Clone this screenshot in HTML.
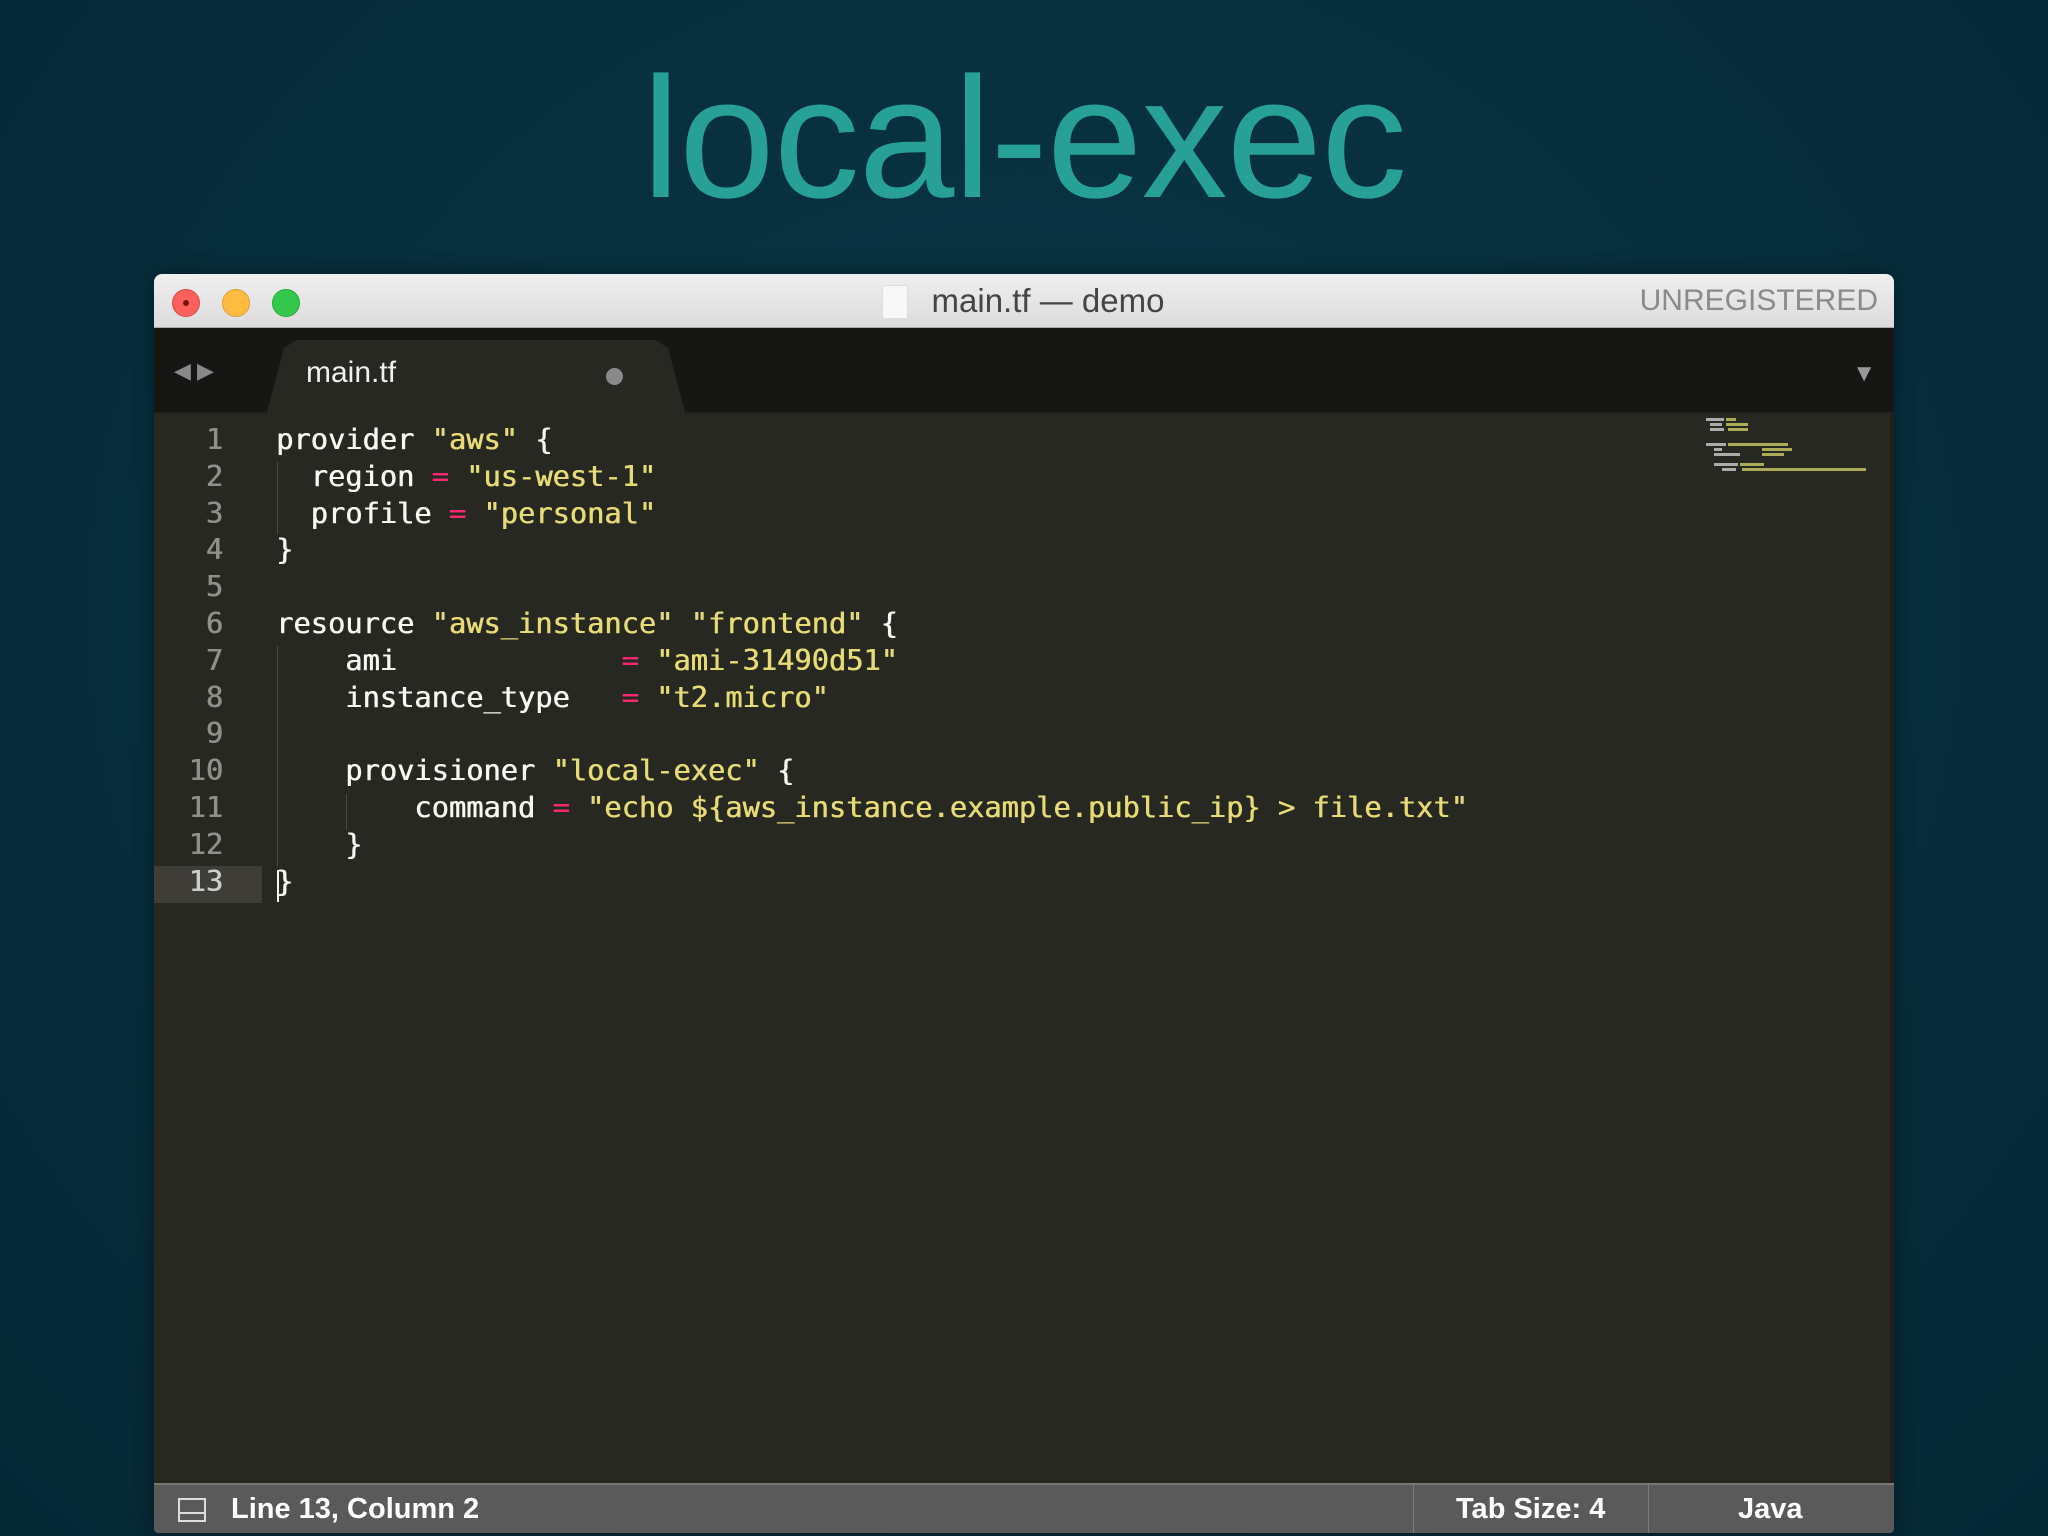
<!DOCTYPE html>
<html><head><meta charset="utf-8"><style>
*{margin:0;padding:0;box-sizing:border-box}
body{width:2048px;height:1536px;background:radial-gradient(ellipse at 50% 40%,#0a3646 0%,#072e3c 60%,#052835 100%);position:relative;overflow:hidden;font-family:"Liberation Sans",sans-serif}
.title{position:absolute;left:0;width:2048px;top:48px;text-align:center;color:#27a197;font-size:172px;letter-spacing:-1px;line-height:180px}
.win{position:absolute;left:154px;top:274px;width:1740px;height:1259px;background:#272822;border-radius:8px 8px 4px 4px;overflow:hidden;box-shadow:0 0 20px rgba(0,0,0,.4)}
.tb{position:absolute;left:0;top:0;width:100%;height:54px;background:linear-gradient(#efefef,#dcdcdc);border-bottom:1px solid #aaa}
.dot{position:absolute;top:15px;width:28px;height:28px;border-radius:50%}
.tt{position:absolute;left:24px;width:100%;top:8px;text-align:center;font-size:33px;color:#444}
.ur{position:absolute;right:16px;top:10px;font-size:30px;color:#8a8a8a}
.tabbar{position:absolute;left:0;top:54px;width:100%;height:86px;background:#161614;border-bottom:2px solid #222}
.tab{position:absolute;left:112px;top:12px;width:420px;height:76px;background:#272822;border-radius:18px 18px 0 0;clip-path:polygon(0 100%,18px 8px,30px 0,390px 0,402px 8px,100% 100%)}
.code{position:absolute;font-family:"DejaVu Sans Mono","Liberation Mono",monospace;font-size:28.7px;white-space:pre;color:#f8f8f2;text-shadow:0.6px 0 0 currentColor}
.ln{position:absolute;left:0;width:69px;text-align:right;color:#8f908a}
.s{color:#e6db74}.o{color:#f92672}
.g{position:absolute;width:1px;background:#4a4a44}
.sb{position:absolute;left:0;bottom:0;width:100%;height:50px;background:#5a5a5a;border-top:2px solid #777;color:#fff;font-size:29px;font-weight:bold}
</style></head><body>
<div class="title">local-exec</div>
<div class="win">
 <div class="tb">
  <div class="dot" style="left:18px;background:#fc605c;border:1px solid #de4a45"><div style="position:absolute;left:10px;top:10px;width:6px;height:6px;border-radius:50%;background:#7a1010"></div></div>
  <div class="dot" style="left:68px;background:#fdbc40;border:1px solid #dea033"></div>
  <div class="dot" style="left:118px;background:#34c84a;border:1px solid #27a83b"></div>
  <div style="position:absolute;left:728px;top:11px;width:26px;height:34px;background:#f8f8f8;border:1px solid #ddd;border-radius:2px"></div>
  <div class="tt">main.tf — demo</div>
  <div class="ur">UNREGISTERED</div>
 </div>
 <div class="tabbar">
  <div style="position:absolute;left:20px;top:30px;color:#888;font-size:22px">◀ ▶</div>
  <div class="tab"></div>
  <div style="position:absolute;left:152px;top:28px;color:#f0f0f0;font-size:30px">main.tf</div>
  <div style="position:absolute;left:452px;top:40px;width:17px;height:17px;border-radius:50%;background:#8a8a8a"></div>
  <div style="position:absolute;right:18px;top:32px;color:#999;font-size:24px">▼</div>
 </div>
 <div style="position:absolute;left:0;top:592px;width:108px;height:37px;background:#3e3d38"></div>
 <div class="g" style="left:123px;top:188px;height:72px"></div>
 <div class="g" style="left:123px;top:372px;height:220px"></div>
 <div class="g" style="left:192px;top:520px;height:36px"></div>
 <div class="code" style="left:0;top:147px;line-height:36.8px">
<div class="ln" style="top:0">1</div><div class="ln" style="top:36.8px">2</div><div class="ln" style="top:73.6px">3</div><div class="ln" style="top:110.4px">4</div><div class="ln" style="top:147.2px">5</div><div class="ln" style="top:184px">6</div><div class="ln" style="top:220.8px">7</div><div class="ln" style="top:257.6px">8</div><div class="ln" style="top:294.4px">9</div><div class="ln" style="top:331.2px">10</div><div class="ln" style="top:368px">11</div><div class="ln" style="top:404.8px">12</div><div class="ln" style="top:441.6px;color:#ccc">13</div>
 </div>
 <div class="code" style="left:122px;top:147px;line-height:36.8px">provider <span class="s">"aws"</span> {
  region <span class="o">=</span> <span class="s">"us-west-1"</span>
  profile <span class="o">=</span> <span class="s">"personal"</span>
}

resource <span class="s">"aws_instance"</span> <span class="s">"frontend"</span> {
    ami             <span class="o">=</span> <span class="s">"ami-31490d51"</span>
    instance_type   <span class="o">=</span> <span class="s">"t2.micro"</span>

    provisioner <span class="s">"local-exec"</span> {
        command <span class="o">=</span> <span class="s">"echo ${aws_instance.example.public_ip} &gt; file.txt"</span>
    }
}</div>
 <div style="position:absolute;left:123px;top:596px;width:2px;height:32px;background:#f8f8f0"></div>
 <div style="position:absolute;left:1552px;top:144px;width:170px;height:60px;opacity:.8">
  <div style="position:absolute;left:0;top:0;width:18px;height:3px;background:#ccc"></div><div style="position:absolute;left:20px;top:0;width:10px;height:3px;background:#cc6"></div>
  <div style="position:absolute;left:4px;top:5px;width:12px;height:3px;background:#ccc"></div><div style="position:absolute;left:20px;top:5px;width:22px;height:3px;background:#cc6"></div>
  <div style="position:absolute;left:4px;top:10px;width:14px;height:3px;background:#ccc"></div><div style="position:absolute;left:22px;top:10px;width:20px;height:3px;background:#cc6"></div>
  <div style="position:absolute;left:0;top:25px;width:20px;height:3px;background:#ccc"></div><div style="position:absolute;left:22px;top:25px;width:60px;height:3px;background:#cc6"></div>
  <div style="position:absolute;left:8px;top:30px;width:8px;height:3px;background:#ccc"></div><div style="position:absolute;left:56px;top:30px;width:30px;height:3px;background:#cc6"></div>
  <div style="position:absolute;left:8px;top:35px;width:26px;height:3px;background:#ccc"></div><div style="position:absolute;left:56px;top:35px;width:22px;height:3px;background:#cc6"></div>
  <div style="position:absolute;left:8px;top:45px;width:24px;height:3px;background:#ccc"></div><div style="position:absolute;left:34px;top:45px;width:24px;height:3px;background:#cc6"></div>
  <div style="position:absolute;left:16px;top:50px;width:14px;height:3px;background:#ccc"></div><div style="position:absolute;left:36px;top:50px;width:124px;height:3px;background:#cc6"></div>
 </div>
 <div style="position:absolute;right:0;top:140px;width:4px;height:1070px;background:#1f201b"></div>
 <div class="sb">
  <div style="position:absolute;left:24px;top:13px;width:28px;height:24px;border:2px solid #ddd"><div style="position:absolute;left:0;right:0;top:12px;height:2px;background:#ddd"></div></div>
  <div style="position:absolute;left:77px;top:8px">Line 13, Column 2</div>
  <div style="position:absolute;left:1259px;top:0;width:1px;height:50px;background:#7a7a7a"></div>
  <div style="position:absolute;left:1302px;top:8px">Tab Size: 4</div>
  <div style="position:absolute;left:1494px;top:0;width:1px;height:50px;background:#7a7a7a"></div>
  <div style="position:absolute;left:1584px;top:8px">Java</div>
 </div>
</div>
</body></html>
